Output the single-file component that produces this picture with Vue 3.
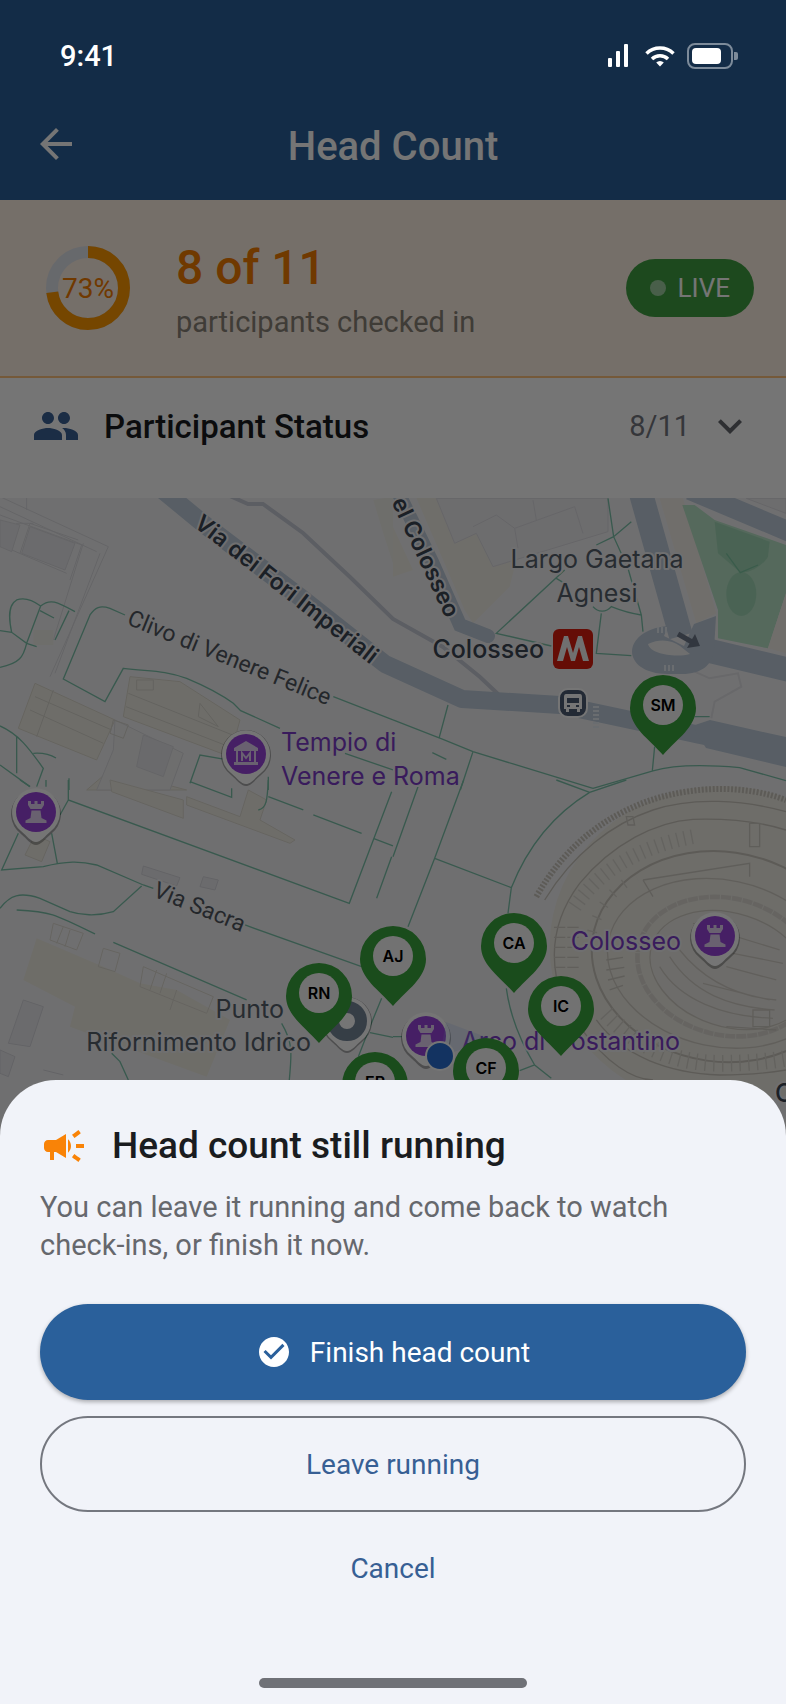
<script setup>

import { computed, ref } from 'vue';

const total = ref(11);
const checkedIn = ref(8);
const sheetOpen = ref(true);

const percent = computed(() => Math.round(checkedIn.value / total.value * 100));

const RADIUS = 36;
const CIRCUMFERENCE = 2 * Math.PI * RADIUS;
const ringDash = computed(() => `${CIRCUMFERENCE * percent.value / 100} ${CIRCUMFERENCE}`);

// x is the centre of the pin, y its top edge
const PINS = [
    { initials: 'SM', x: 663, y: 675 },
    { initials: 'AJ', x: 393, y: 926 },
    { initials: 'CA', x: 514, y: 913 },
    { initials: 'IC', x: 561, y: 976 },
    { initials: 'RN', x: 319, y: 963 },
    { initials: 'ER', x: 375, y: 1052 },
    { initials: 'CF', x: 486, y: 1038 },
];

const TOWERS = [
    { x: 36, y: 812 },
    { x: 715, y: 936 },
    { x: 426, y: 1036 },
];

const closeSheet = () => {
    sheetOpen.value = false;
};

</script>

<template>

<div class="screen">
    <header class="header">
        <div class="status-bar">
            <span>9:41</span>
            <div class="status-icons">
                <svg class="signal" width="21" height="24" viewBox="0 0 21 24" fill="#fff">
                    <rect x="0" y="14" width="4" height="9" rx="1" />
                    <rect x="8" y="7" width="4" height="16" rx="1" />
                    <rect x="16" y="0" width="4" height="23" rx="1" />
                </svg>
                <svg width="30" height="22" viewBox="0 0 30 22" fill="none" stroke="#fff" stroke-width="3.5">
                    <path d="M1.5 8.5a19.5 19.5 0 0 1 27 0" />
                    <path d="M7 14a11.5 11.5 0 0 1 16 0" />
                    <path d="M15 21.5l-3.8-4a5.5 5.5 0 0 1 7.6 0z" fill="#fff" stroke="none" />
                </svg>
                <svg width="51" height="26" viewBox="0 0 51 26">
                    <rect x="1" y="1" width="44" height="24" rx="7" fill="none" stroke="#fff" stroke-opacity=".45" stroke-width="2" />
                    <rect x="5" y="5" width="29" height="16" rx="4" fill="#fff" />
                    <path d="M47 9h2q2 0 2 2v4q0 2-2 2h-2z" fill="#fff" fill-opacity=".45" />
                </svg>
            </div>
        </div>
        <div class="app-bar">
            <button class="back" aria-label="Back">
                <svg class="icon" viewBox="0 0 24 24"><path d="M20 11H7.83l5.59-5.59L12 4l-8 8 8 8 1.41-1.41L7.83 13H20v-2z" /></svg>
            </button>
            <h1>Head Count</h1>
        </div>
    </header>

    <section class="progress">
        <svg class="ring" viewBox="0 0 84 84">
            <circle cx="42" cy="42" :r="RADIUS" fill="none" stroke="#e0e4ec" stroke-width="12" />
            <circle cx="42" cy="42" :r="RADIUS" fill="none" stroke="#ff9800" stroke-width="12" :stroke-dasharray="ringDash" transform="rotate(-90 42 42)" />
            <text x="42" y="52" text-anchor="middle">{{ percent }}%</text>
        </svg>
        <div class="progress-text">
            <strong>{{ checkedIn }} of {{ total }}</strong>
            <span>participants checked in</span>
        </div>
        <div class="live"><i></i>LIVE</div>
    </section>

    <button class="participants">
        <svg class="icon" viewBox="0 0 24 24"><path d="M16 11c1.66 0 2.99-1.34 2.99-3S17.66 5 16 5s-3 1.34-3 3 1.34 3 3 3zm-8 0c1.66 0 2.99-1.34 2.99-3S9.66 5 8 5 5 6.34 5 8s1.34 3 3 3zm0 2c-2.33 0-7 1.17-7 3.5V19h14v-2.5c0-2.33-4.67-3.5-7-3.5zm8 0c-.29 0-.62.02-.97.05 1.16.84 1.97 1.97 1.97 3.45V19h6v-2.5c0-2.33-4.67-3.5-7-3.5z" /></svg>
        <span class="participants-title">Participant Status</span>
        <span class="participants-count">{{ checkedIn }}/{{ total }}</span>
        <svg class="icon chevron" viewBox="0 0 24 24"><path d="M7.41 8.59 12 13.17l4.59-4.58L18 10l-6 6-6-6z" /></svg>
    </button>

    <main class="map">
        <svg viewBox="0 498 786 1206" preserveAspectRatio="xMidYMin slice">
            <defs>
                <g id="tower">
                    <path d="M0 31C-5 31-9 25-15 20A25 25 0 1 1 15 20C9 25 5 31 0 31z" fill="#000" opacity=".3" transform="translate(0 2)" />
                    <path d="M0 30C-5 30-9 24-15 19A24 24 0 1 1 15 19C9 24 5 30 0 30z" fill="#fff" />
                    <circle r="20" fill="#9a45dc" />
                    <path d="M-8-11h3v3h3.5v-3h3v3h3.5v-3h3v4l-2.500 4h-11l-2.500-4zM-4.500-1.500h9L5.500 6l5 2.500V11h-21V8.500l5-2.500z" fill="#e4d4f4" />
                </g>
            </defs>

            <!-- Colosseum -->
            <g transform="translate(393 780) scale(.3333)" fill="none" stroke="#cac6bd" stroke-width="4">
                <ellipse cx="985" cy="500" rx="515" ry="482" fill="#efede5" stroke="none" />
                <path d="M430 350C520 190 640 110 760 65 900 15 1060 15 1179 60" stroke-width="18" stroke-dasharray="6 5" />
                <path d="M455 360C540 220 660 130 780 90 900 50 1050 60 1179 95" />
                <path d="M490 590C470 480 500 390 560 310 660 190 790 125 900 118 1000 115 1100 125 1179 150" />
                <path d="M545 380C620 270 740 200 900 170" stroke-width="44" stroke-dasharray="4 18" stroke="#dad7d0" />
                <path d="M500 440V590M540 440V590" stroke-width="34" stroke-dasharray="4 26" stroke="#d3cfc6" />
                <ellipse cx="985" cy="530" rx="390" ry="315" transform="rotate(8 985 530)" stroke-width="6" />
                <ellipse cx="985" cy="550" rx="345" ry="250" transform="rotate(12 985 550)" stroke="#d3cfc6" />
                <ellipse cx="1000" cy="560" rx="270" ry="205" transform="rotate(14 1000 560)" stroke="#dedbd4" stroke-width="14" stroke-dasharray="30 3" />
                <ellipse cx="1010" cy="570" rx="245" ry="170" transform="rotate(18 1010 570)" fill="#eeece8" stroke="#d3cfc6" />
                <path d="M800 560C860 660 990 710 1140 715M830 530C900 640 1010 680 1145 690M860 510C940 610 1040 650 1150 660M930 610l200 50M1000 560l150 40M1020 520l150 30M900 430l260 80" stroke="#d4d0c8" />
                <path d="M750 300L1070 250V290M750 300L780 350M1070 130h30v70h-30zM700 110h20l5 25h-20z" stroke="#d0ccc4" />
                <path d="M610 720C690 830 830 880 980 885c80 0 140-5 199-15M560 740C640 850 720 900 780 900" />
                <path d="M640 700C740 810 860 850 980 850 1060 850 1120 845 1179 835" stroke-width="50" stroke-dasharray="4 22" stroke="#d8d5cd" />
                <path d="M590 500C600 400 650 330 730 290" stroke-width="30" stroke-dasharray="4 40" stroke="#d8d5cd" />
                <path d="M640 540l50-8M640 570l54-8M645 600l50-12M650 630l40-14M1000 740l150 10M1080 690h50v50h-50z" stroke="#d0ccc4" />
            </g>

            <!-- buildings -->
            <g transform="translate(0 490) scale(.3333)" fill="none" stroke="#dcdce0" stroke-width="3">
                <path d="M0 20L325 170 150 560M0 50L290 185M0 75L245 165 210 270M80 0V60M0 165L200 250M20 180l30-80 50 0M300 190L165 550M250 160L160 450M60 190l30-90 145 50" />
                <path d="M90 110L225 160 195 240 65 190zM0 90L60 105 35 185 0 170z" fill="#e9e9ee" />
                <path d="M105 580L345 690 290 810 55 715zM390 560L540 575 720 690 690 800 370 680zM330 840l230 60 0 0H260z" fill="#f0eee4" stroke="#dedbd0" />
                <path d="M345 690L550 790 510 900H290l50-120z" fill="#efefef" />
                <path d="M430 735L520 770 490 860 410 830z" fill="#e7e7ec" />
                <path d="M105 620L335 720M90 660L310 760M385 610L710 740M378 650L700 775M340 690l45 15-15 40-40-15zM600 640l-5 40 60 30zM160 600L110 740M410 570h50v30h-50z" stroke="#d9d7d0" />
                <path d="M100 420h60v45h-60zM1120 30L1179 20V220L1150 130z" fill="#f0efe9" stroke="none" />
            </g>
            <g transform="translate(393 490) scale(.3333)" fill="none" stroke="#dedde2" stroke-width="3">
                <path d="M0 110L60 240 0 260zM60 0H180L240 110 300 220 370 210 350 290 240 400 215 360z" fill="#f2efe7" stroke="none" />
                <path d="M130 25H645V125L300 230 250 130 185 160z" fill="#ededf0" />
                <path d="M365 115L545 50M365 115l10 60M545 50l25 80M240 110l70-35 55 40M420 30l10 60" />
                <path d="M800 25H870L970 370 910 400z" fill="#f4efe9" stroke="none" />
                <path d="M1060 25L1179 70V25z" fill="#eeeef0" />
                <path d="M905 545l45 20 85-15 10 40-80 45-10 50" stroke="#e2e2e6" stroke-width="6" />
            </g>
            <g transform="translate(0 780) scale(.3333)" fill="none" stroke="#dedbd2" stroke-width="3">
                <path d="M110 475L310 560 420 610 530 630 690 720 620 890 210 740 225 680 70 600z" fill="#efede3" stroke="none" />
                <path d="M330 0L550 60V115L335 35zM560 50L720 110 745 30 800 60 780 120 885 180 870 190 560 75zM75 225l30-60 45 20-25 60z" fill="#f0eee4" />
                <path d="M70 660L130 680 90 800 25 790zM0 810l45 20-20 60-25-10zM130 870l60 15M430 258l110 35-10 25-105-35zM610 290l45 10-10 30-45-10z" fill="#e9e9ed" stroke="#d8d8de" />
                <path d="M310 505l50 15-15 55-50-15zM160 430l90 30-20 50-80-30zM190 440l-20 50M210 450l-15 50M430 560l210 90-20 50-200-80zM470 570l-20 60M500 580l-20 60M530 630l-20 60" />
            </g>

            <!-- park -->
            <g transform="translate(393 490) scale(.3333)">
                <path d="M868 45L905 45 965 90 1179 165V310L1125 475 975 445V360z" fill="#b9e4c8" />
                <path d="M965 95L1130 155 1125 200C1110 225 1080 245 1045 250L975 190z" fill="#a2d8b8" />
                <ellipse cx="1045" cy="312" rx="45" ry="66" fill="#a2d8b8" />
                <path d="M1000 190L1042 248 1095 225" fill="none" stroke="#7fc8a4" stroke-width="4" />
                <path d="M1179 310V490L1125 475z" fill="#f4efe9" />
            </g>

            <!-- footpaths -->
            <g fill="none" stroke="#7cc3ab" stroke-width="4">
                <g transform="translate(0 490) scale(.3333)">
                    <path d="M0 422 35 427 80 460 110 470M35 427C25 380 25 345 50 330 75 320 100 332 122 348L80 460C70 500 60 520 0 532M122 348C150 325 170 335 225 365M120 362l42 22M207 362L165 450" />
                    <path d="M375 375L330 355C300 345 285 352 270 375L190 567 315 635 370 535C450 545 490 540 560 565 620 590 660 610 700 640L722 662 840 715M1000 620L1179 690M1035 790L1179 840M675 808L600 795 570 880M805 860V900" />
                    <path d="M0 708C60 735 90 780 130 835L110 890M50 740V850M0 825L90 890M100 790c30-2 50 3 68 14M207 865V900" />
                </g>
                <g transform="translate(393 490) scale(.3333)">
                    <path d="M0 690L150 748 240 785 600 895M165 645L138 745M118 788l42 20M240 785L202 900M645 25L662 140 705 235 745 375 750 425M715 95L662 140 610 165M515 240L310 430 475 468M600 350c15 18 40 18 55 0 30 12 55 20 90 25M625 370L610 490 715 497M490 265l20 12" />
                    <path d="M600 895L780 843C850 822 950 825 1040 833L1179 872M785 770L778 843M905 680h45" />
                </g>
                <g transform="translate(0 780) scale(.3333)">
                    <path d="M205 0V60L1048 370 1122 175 1175 35M205 60L180 105M570 5L695 52V25M805 0C802 60 800 85 775 90M805 50L910 90M940 105L1085 160M1120 175L1179 198M1175 230L1130 355" />
                    <path d="M55 160L5 270 130 260C200 243 240 243 290 255L430 315 460 325M155 160L172 250M425 318L340 395C290 410 240 405 210 395L120 355C60 335 30 345 0 385M50 390C150 395 160 400 285 462M340 487L740 660M735 435L1085 560M335 820L360 845 385 900M845 730C880 790 875 820 868 900M1145 655L1110 740 1075 830M1110 758L1179 772M60 0L90 20M138 0V20" />
                </g>
                <g transform="translate(393 780) scale(.3333)">
                    <path d="M75 20L0 230M212 0L125 235 45 440M125 235L355 323M490 0L590 37M700 0L590 37C470 110 400 210 355 323L345 400M340 625C350 700 380 780 425 855L475 895M380 872l45-17M0 770h30" />
                </g>
            </g>

            <!-- roads -->
            <g fill="none" stroke="#bfcddc">
                <path d="M230 496L248 504H263L303 533 350 577 393 619 443 647 480 677 498 694" stroke="#c8ccd8" stroke-width="4" />
                <path d="M160 488L205 525 300 597 385 664 462 699 560 705 640 722 700 735 786 752" stroke-width="18" stroke-linejoin="round" />
                <path d="M692 726L710 720 790 738V768L706 748z" fill="#bfcddc" stroke="none" />
                <path d="M396 488L432 562 460 625 488 636" stroke-width="14" stroke-linecap="round" />
                <path d="M640 490L681 636" stroke-width="24" />
                <path d="M690 490L790 532" stroke-width="20" />
                <path d="M706 650L790 670" stroke-width="24" />
                <path d="M668 626C620 630 620 674 668 674H682C702 674 712 665 714 650L716 616 694 624 684 646 664 636z" fill="#bfcddc" stroke="none" />
                <path d="M648 644C660 638 672 640 680 646L690 654C675 658 650 654 648 644z" fill="#f2f2f2" stroke="none" />
                <path d="M596 706v24M657 630h10M664 668h11" stroke="#e7edf4" stroke-width="6" stroke-dasharray="2 2" />
                <path d="M678 634L692 642" stroke="#6e7889" stroke-width="5" />
                <path d="M687 648L700 646 695 634z" fill="#6e7889" stroke="none" />
            </g>

            <!-- labels -->
            <g class="labels">
                <text class="street" transform="translate(193 526) rotate(38)">Via dei Fori Imperiali</text>
                <text class="street" text-anchor="end" transform="translate(446 619) rotate(65)">el Colosseo</text>
                <text class="lane" transform="translate(126 624) rotate(22)">Clivo di Venere Felice</text>
                <text class="lane" transform="translate(152 896) rotate(22)">Via Sacra</text>
                <text x="597" y="568" text-anchor="middle">Largo Gaetana</text>
                <text x="597" y="602" text-anchor="middle">Agnesi</text>
                <text class="station" x="544" y="658" text-anchor="end">Colosseo</text>
                <text x="284" y="1018" text-anchor="end">Punto</text>
                <text x="311" y="1051" text-anchor="end">Rifornimento Idrico</text>
                <text class="sight" x="281" y="751">Tempio di</text>
                <text class="sight" x="281" y="785">Venere e Roma</text>
                <text class="sight" x="681" y="950" text-anchor="end">Colosseo</text>
                <text class="sight" x="680" y="1050" text-anchor="end">Arco di Costantino</text>
                <text class="station" x="775" y="1102">C</text>
            </g>

            <!-- metro and bus stops -->
            <g transform="translate(573 649)">
                <rect x="-20" y="-20" width="40" height="40" rx="6" fill="#dc1e0e" />
                <path d="M-16 12L-9-13H-5L0 4 5-13H9L16 12H10L6-2 2 12H-2L-6-2-10 12z" fill="#f4f4f4" />
            </g>
            <g transform="translate(573 703)">
                <rect x="-14" y="-14" width="28" height="28" rx="9" fill="#4c5c74" stroke="#fff" stroke-width="2" />
                <path d="M-7-9H7q2 0 2 3V6H7v3H4V6H-4v3H-7V6H-9V-6q0-3 2-3zM-6-5v5H6v-5zM-6 2v2h3V2zM3 2v2h3V2z" fill="#fff" fill-rule="evenodd" />
            </g>

            <!-- sights -->
            <use v-for="tower in TOWERS" :key="tower.x" href="#tower" :x="tower.x" :y="tower.y" />
            <g transform="translate(246 754)">
                <path d="M0 32C-5 32-9 26-15 21A25 25 0 1 1 15 21C9 26 5 32 0 32z" fill="#000" opacity=".3" />
                <path d="M0 30C-5 30-9 24-15 19A24 24 0 1 1 15 19C9 24 5 30 0 30z" fill="#fff" />
                <circle r="20" fill="#9a45dc" />
                <path d="M0-13L12-6V-3H10V8H12V11H-12V8H-10V-3H-12V-6zM-8-3V8H8V-3z" fill="#e4d4f4" fill-rule="evenodd" />
                <path d="M-4 7V-1L0 4 4-1V7" fill="none" stroke="#e4d4f4" stroke-width="2" />
            </g>
            <g transform="translate(347 1021)">
                <path d="M0 32C-5 32-9 26-15 21A25 25 0 1 1 15 21C9 26 5 32 0 32z" fill="#000" opacity=".3" />
                <path d="M0 30C-5 30-9 24-15 19A24 24 0 1 1 15 19C9 24 5 30 0 30z" fill="#fff" />
                <circle r="14" fill="none" stroke="#76879a" stroke-width="12" />
            </g>

            <!-- own position -->
            <path d="M440 1056L446 1022 494 1040z" fill="#8fb4f0" opacity=".2" />
            <circle cx="440" cy="1056" r="14" fill="#2b70d4" stroke="#fff" stroke-width="2" />

            <!-- participants -->
            <g v-for="pin in PINS" :key="pin.initials" :transform="`translate(${pin.x} ${pin.y})`">
                <path d="M0 80C-14 64-33 52-33 33A33 33 0 0 1 33 33C33 52 14 64 0 80z" fill="#3aa53e" />
                <circle cy="30" r="20" fill="#f8f8f8" />
                <text class="initials" y="36" text-anchor="middle">{{ pin.initials }}</text>
            </g>
        </svg>
    </main>

    <div v-if="sheetOpen" class="scrim" @click="closeSheet"></div>

    <section v-if="sheetOpen" class="sheet" role="dialog" aria-labelledby="sheet-title">
        <div class="sheet-head">
            <svg class="icon" viewBox="0 0 24 24"><path d="M18 11v2h4v-2h-4zm-2 6.61c.96.71 2.21 1.65 3.2 2.39.4-.53.8-1.07 1.2-1.6-.99-.74-2.24-1.68-3.2-2.4-.4.54-.8 1.08-1.2 1.61zM20.4 5.6c-.4-.53-.8-1.07-1.2-1.6-.99.74-2.24 1.68-3.2 2.4.4.53.8 1.07 1.2 1.6.96-.72 2.21-1.65 3.2-2.4zM4 9c-1.1 0-2 .9-2 2v2c0 1.1.9 2 2 2h1v4h2v-4h1l5 3V6L8 9H4zm11.5 3c0-1.33-.58-2.53-1.5-3.35v6.69c.92-.81 1.5-2.01 1.5-3.34z" /></svg>
            <h2 id="sheet-title">Head count still running</h2>
        </div>
        <p>You can leave it running and come back to watch <span class="nowrap">check-ins,</span> or finish it now.</p>
        <div class="actions">
            <button class="filled">
                <svg class="icon small" viewBox="0 0 24 24"><path d="M12 2C6.48 2 2 6.48 2 12s4.48 10 10 10 10-4.48 10-10S17.52 2 12 2zm-2 15l-5-5 1.41-1.41L10 14.17l7.59-7.59L19 8l-9 9z" /></svg>
                Finish head count
            </button>
            <button class="outlined" @click="closeSheet">Leave running</button>
            <button class="plain" @click="closeSheet">Cancel</button>
        </div>
        <div class="home-indicator"></div>
    </section>
</div>

</template>

<style>

body {
    margin: 0;
}

</style>

<style scoped>

.screen {
    position: relative;
    display: flex;
    flex-direction: column;
    min-height: 100vh;
    overflow: hidden;
    background: #fff;
    font-family: Roboto, "Liberation Sans", sans-serif;
    font-size: 28px;
}

button {
    margin: 0;
    border: none;
    background: none;
    font: inherit;
    cursor: pointer;
}

h1,
h2,
p {
    margin: 0;
}

.icon {
    display: block;
    flex: none;
    width: 48px;
    height: 48px;
    fill: currentColor;
}

.icon.small {
    width: 36px;
    height: 36px;
}

.nowrap {
    white-space: nowrap;
}

.header {
    background: #2a609b;
    color: #fff;
}

/* stays bright above the scrim */
.status-bar {
    position: relative;
    z-index: 3;
    display: flex;
    align-items: center;
    justify-content: space-between;
    height: 100px;
    padding: 12px 48px 0 60px;
    box-sizing: border-box;
    font-size: 29px;
    font-weight: 500;
}

.status-icons {
    display: flex;
    align-items: center;
    gap: 12px;
}

.signal {
    margin-right: 4px;
}

.app-bar {
    display: grid;
    grid-template-columns: 48px 1fr 48px;
    align-items: center;
    height: 100px;
    padding: 0 32px 12px;
    box-sizing: border-box;
}

.back {
    padding: 0;
    color: #fff;
}

h1 {
    padding-top: 4px;
    font-size: 40px;
    font-weight: 500;
    text-align: center;
}

.progress {
    display: flex;
    align-items: center;
    padding: 32px;
    border-bottom: 2px solid #ffc37d;
    background: #fff1e4;
}

.ring {
    width: 84px;
    height: 84px;
    margin: 0 46px 0 14px;
}

.ring text {
    fill: #f57c00;
    font-size: 28px;
}

.progress-text {
    display: flex;
    flex: 1;
    flex-direction: column;
    padding-top: 4px;
    color: #8a8378;
    font-size: 29px;
    line-height: 44px;
}

.progress-text strong {
    color: #f57c00;
    font-size: 48px;
    font-weight: 500;
    line-height: 64px;
}

.live {
    display: flex;
    align-items: center;
    gap: 12px;
    height: 58px;
    padding: 0 24px;
    border-radius: 29px;
    background: #3fa043;
    color: #fff;
    font-size: 26px;
}

.live i {
    width: 16px;
    height: 16px;
    border-radius: 50%;
    background: #fff;
    opacity: .5;
}

.participants {
    display: flex;
    align-items: center;
    width: 100%;
    padding: 24px 32px 48px;
    color: #3c6296;
    text-align: left;
}

.participants-title {
    flex: 1;
    margin-left: 24px;
    color: #1a1c20;
    font-size: 33px;
    font-weight: 500;
}

.participants-count {
    margin-right: 16px;
    color: #74777f;
    font-size: 29px;
}

.chevron {
    color: #64676e;
}

.map {
    position: relative;
    flex: 1;
    background: #f2f2f4;
}

.map svg {
    position: absolute;
    inset: 0;
    width: 100%;
    height: 100%;
}

.labels {
    fill: #56606c;
    stroke: #f2f2f4;
    stroke-width: 4px;
    stroke-linejoin: round;
    paint-order: stroke;
    font-family: Inter, "Liberation Sans", sans-serif;
    font-size: 25px;
}

.lane {
    fill: #50565e;
    font-family: Roboto, "Liberation Sans", sans-serif;
    font-size: 23px;
}

.street {
    fill: #3c4654;
    font-size: 23px;
    font-weight: 600;
}

.station {
    fill: #3c4654;
    font-weight: 500;
}

.sight {
    fill: #7c3cc8;
}

.initials {
    font-family: Inter, "Liberation Sans", sans-serif;
    font-size: 16px;
    font-weight: 600;
}

.scrim {
    position: absolute;
    inset: 0;
    z-index: 2;
    background: rgba(0, 0, 0, .54);
}

.sheet {
    position: absolute;
    right: 0;
    bottom: 0;
    left: 0;
    z-index: 4;
    padding: 42px 40px 16px;
    border-radius: 56px 56px 0 0;
    background: #f1f3f9;
    color: #66686d;
}

.sheet-head {
    display: flex;
    align-items: center;
    gap: 24px;
    color: #f98307;
}

h2 {
    color: #1a1c20;
    font-size: 37px;
    font-weight: 500;
    line-height: 48px;
}

p {
    margin: 18px 0 40px;
    font-size: 29px;
    line-height: 38px;
}

.actions {
    display: flex;
    flex-direction: column;
    gap: 16px;
}

.actions button {
    display: flex;
    align-items: center;
    justify-content: center;
    gap: 18px;
    height: 96px;
    border-radius: 48px;
    color: #375f94;
}

.actions .filled {
    background: #2a609b;
    box-shadow: 0 2px 4px rgba(0, 0, 0, .3);
    color: #fff;
}

.actions .outlined {
    border: 2px solid #74777f;
}

.actions .plain {
    height: 80px;
}

.home-indicator {
    width: 268px;
    height: 10px;
    margin: 70px auto 0;
    border-radius: 5px;
    background: #6f7177;
}

</style>
